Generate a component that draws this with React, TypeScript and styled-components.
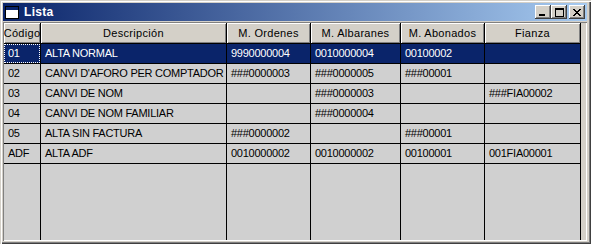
import styled, { createGlobalStyle } from "styled-components";

const GlobalStyle = createGlobalStyle`
  html, body {
    margin: 0;
    padding: 0;
    background: #d4d0c8;
  }
  body {
    font-family: "Liberation Sans", Arial, sans-serif;
    font-size: 11px;
  }
`;

type Row = { id: string; cells: string[] };

const COLUMNS = [
  { title: "Código", width: 37 },
  { title: "Descripción", width: 186 },
  { title: "M. Ordenes", width: 84 },
  { title: "M. Albaranes", width: 90 },
  { title: "M. Abonados", width: 84 },
  { title: "Fianza", width: 96 },
];

const ROWS: Row[] = [
  { id: "01", cells: ["01", "ALTA NORMAL", "9990000004", "0010000004", "00100002", ""] },
  { id: "02", cells: ["02", "CANVI D'AFORO PER COMPTADOR", "###0000003", "###0000005", "###00001", ""] },
  { id: "03", cells: ["03", "CANVI DE NOM", "", "###0000003", "", "###FIA00002"] },
  { id: "04", cells: ["04", "CANVI DE NOM FAMILIAR", "", "###0000004", "", ""] },
  { id: "05", cells: ["05", "ALTA SIN FACTURA", "###0000002", "", "###00001", ""] },
  { id: "ADF", cells: ["ADF", "ALTA ADF", "0010000002", "0010000002", "00100001", "001FIA00001"] },
];

const SELECTED = "01";

function WindowIcon() {
  return (
    <svg width="14" height="13" viewBox="0 0 14 13" shapeRendering="crispEdges">
      <rect x="0.5" y="0.5" width="13" height="12" fill="#fff" stroke="#000" />
      <rect x="1" y="1" width="12" height="3" fill="#0a246a" />
    </svg>
  );
}

function MinGlyph() {
  return (
    <svg width="8" height="7" viewBox="0 0 8 7" shapeRendering="crispEdges">
      <rect x="0" y="5" width="6" height="2" fill="#000" />
    </svg>
  );
}

function MaxGlyph() {
  return (
    <svg width="9" height="9" viewBox="0 0 9 9" shapeRendering="crispEdges">
      <rect x="0.5" y="0.5" width="8" height="8" fill="none" stroke="#000" />
      <rect x="0" y="1" width="9" height="1" fill="#000" />
    </svg>
  );
}

function CloseGlyph() {
  return (
    <svg width="8" height="7" viewBox="0 0 8 7" shapeRendering="crispEdges">
      {[0, 1, 2, 3, 4, 5, 6].map((i) => (
        <g key={i}>
          <rect x={i} y={i} width="2" height="1" fill="#000" />
          <rect x={6 - i} y={i} width="2" height="1" fill="#000" />
        </g>
      ))}
    </svg>
  );
}

export default function App() {
  return (
    <>
      <GlobalStyle />
      <Win>
        <TitleBar>
          <WindowIcon />
          <Title>Lista</Title>
          <Controls>
            <CtlButton>
              <MinGlyph />
            </CtlButton>
            <CtlButton>
              <MaxGlyph />
            </CtlButton>
            <CtlButton $gap>
              <CloseGlyph />
            </CtlButton>
          </Controls>
        </TitleBar>
        <Grid>
          <Line>
            {COLUMNS.map((c) => (
              <HeaderCell key={c.title} $w={c.width}>
                <span>{c.title}</span>
              </HeaderCell>
            ))}
          </Line>
          {ROWS.map((r) => (
            <Line key={r.id}>
              {r.cells.map((text, i) => (
                <Cell
                  key={i}
                  $w={COLUMNS[i].width}
                  $selected={r.id === SELECTED}
                  $focused={r.id === SELECTED && i === 0}
                >
                  {text}
                </Cell>
              ))}
            </Line>
          ))}
          <Filler>
            {COLUMNS.map((c) => (
              <EmptyCol key={c.title} $w={c.width} />
            ))}
          </Filler>
        </Grid>
      </Win>
    </>
  );
}

const Win = styled.div`
  box-sizing: border-box;
  width: 591px;
  height: 244px;
  display: flex;
  flex-direction: column;
  gap: 1px;
  padding: 3px 4px 3px 3px;
  background: #d4d0c8;
  box-shadow: inset 1px 1px #d4d0c8, inset 2px 2px #fff, inset -1px -1px #404040,
    inset -2px -2px #808080;
`;

const TitleBar = styled.div`
  height: 18px;
  flex: none;
  display: flex;
  align-items: center;
  padding: 0 2px 0 2px;
  background: linear-gradient(to right, #0a246a, #a6caf0);
  color: #fff;
`;

const Title = styled.span`
  margin-left: 5px;
  font-family: "Liberation Sans", Arial, sans-serif;
  font-weight: bold;
  font-size: 12px;
  letter-spacing: 0.3px;
`;

const Controls = styled.div`
  margin-left: auto;
  display: flex;
  align-items: center;
`;

const CtlButton = styled.div<{ $gap?: boolean }>`
  box-sizing: border-box;
  width: 16px;
  height: 14px;
  margin-left: ${({ $gap }) => ($gap ? "2px" : "0")};
  display: flex;
  align-items: center;
  justify-content: center;
  background: #d4d0c8;
  box-shadow: inset -1px -1px #404040, inset 1px 1px #fff, inset -2px -2px #808080;
`;

const Grid = styled.div`
  flex: 1;
  display: flex;
  flex-direction: column;
  padding: 1px 1px 1px 1px;
  background: #d4d0c8;
  box-shadow: inset 1px 1px #808080, inset -1px -1px #fff;
  overflow: hidden;
`;

const Line = styled.div`
  display: flex;
  flex: none;
`;

const HeaderCell = styled.div<{ $w: number }>`
  box-sizing: border-box;
  width: ${({ $w }) => $w}px;
  height: 21px;
  display: flex;
  justify-content: center;
  align-items: center;
  overflow: hidden;
  background: #d4d0c8;
  border-right: 1px solid #000;
  border-bottom: 1px solid #000;
  box-shadow: inset 1px 1px #fff, inset -1px -1px #808080;
  color: #000;
  white-space: nowrap;
  span {
    flex: none;
    letter-spacing: 0.3px;
  }
`;

const Cell = styled.div<{ $w: number; $selected: boolean; $focused: boolean }>`
  position: relative;
  box-sizing: border-box;
  width: ${({ $w }) => $w}px;
  height: 20px;
  padding: 0 0 0 4px;
  line-height: 19px;
  overflow: hidden;
  white-space: nowrap;
  letter-spacing: -0.25px;
  border-right: 1px solid #000;
  border-bottom: 1px solid #000;
  background: ${({ $selected }) => ($selected ? "#0a246a" : "#d0d0d0")};
  color: ${({ $selected }) => ($selected ? "#fff" : "#000")};

  &::after {
    content: "";
    display: ${({ $focused }) => ($focused ? "block" : "none")};
    position: absolute;
    inset: 0;
    border: 1px dotted #fff;
  }
`;

const Filler = styled.div`
  flex: 1;
  display: flex;
`;

const EmptyCol = styled.div<{ $w: number }>`
  box-sizing: border-box;
  width: ${({ $w }) => $w}px;
  background: #d0d0d0;
  border-right: 1px solid #000;
`;
